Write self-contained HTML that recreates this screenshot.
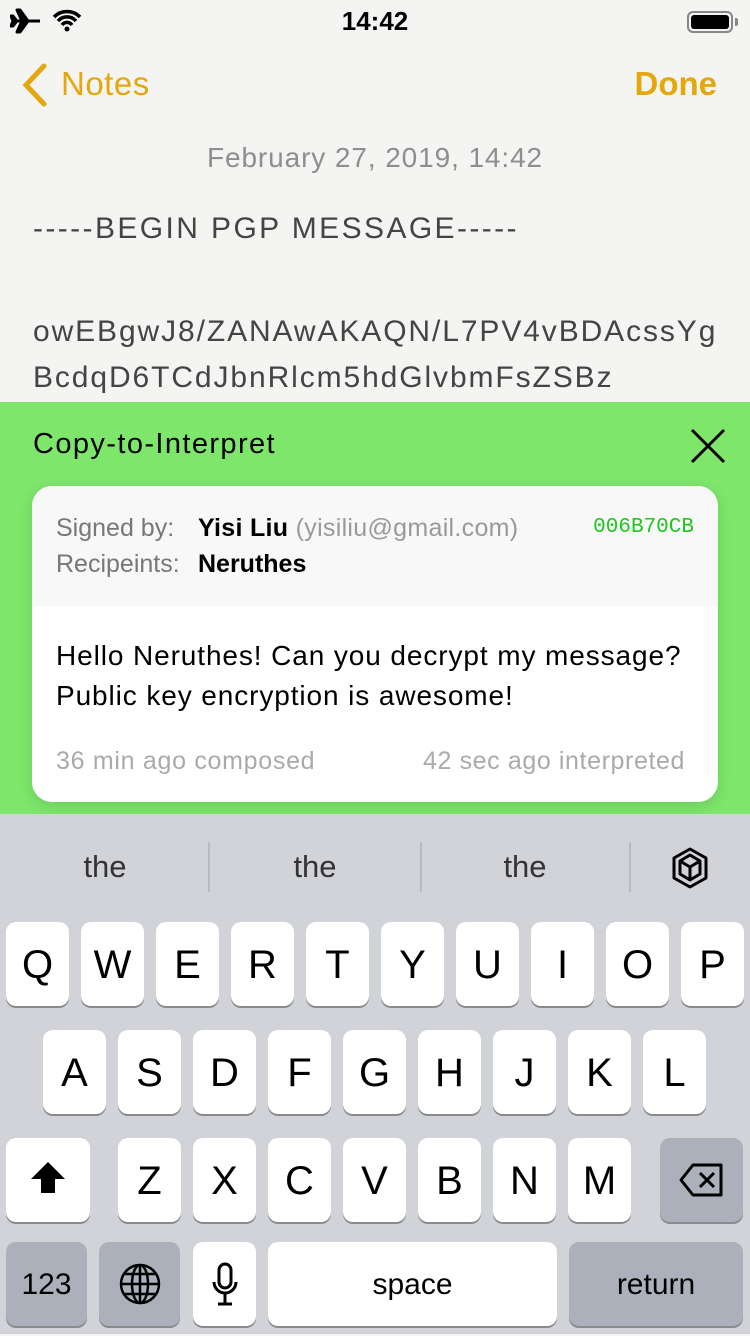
<!DOCTYPE html>
<html><head><meta charset="utf-8"><style>
*{margin:0;padding:0;box-sizing:border-box}
body{width:750px;height:1334px;position:relative;overflow:hidden;background:#f4f4f3;font-family:"Liberation Sans",sans-serif}
.a{position:absolute;white-space:nowrap}
.k{position:absolute;background:#fff;border-radius:10px;box-shadow:0 2px 0 #898a8d;font-size:40px;color:#000;text-align:center;width:63px;height:84px;line-height:86px}
.g{background:#abb0ba}
</style></head><body>
<!-- status bar -->
<svg class="a" style="left:10px;top:8px" width="32" height="26" viewBox="0 0 32 26"><path d="M2 13h28M18 13l-8-11h-3l5 11M18 13l-8 11h-3l5-11M3 13l-2-5h2l4 5M3 13l-2 5h2l4-5" stroke="#000" stroke-width="3" fill="#000" stroke-linejoin="round"/></svg>
<svg class="a" style="left:52px;top:8px" width="30" height="24" viewBox="0 0 30 24"><path d="M2 9a18 18 0 0 1 26 0M6 13a12 12 0 0 1 18 0M10 17a6 6 0 0 1 10 0" stroke="#000" stroke-width="3.5" fill="none"/><circle cx="15" cy="21" r="2.5"/></svg>
<div class="a" style="left:0;width:750px;text-align:center;top:6px;font-size:26px;font-weight:bold">14:42</div>
<div class="a" style="left:687px;top:11px;width:46px;height:22px;border:2px solid #888;border-radius:6px;padding:2px"><div style="background:#000;width:100%;height:100%;border-radius:3px"></div></div>
<div class="a" style="left:735px;top:18px;width:3px;height:8px;background:#888;border-radius:0 2px 2px 0"></div>
<!-- nav -->
<svg class="a" style="left:20px;top:62px" width="30" height="46" viewBox="0 0 30 46"><path d="M24 4L6 23l18 19" stroke="#e4a80e" stroke-width="5" fill="none" stroke-linecap="round"/></svg>
<div class="a" style="left:61px;top:65px;font-size:33px;color:#e4a80e;letter-spacing:0.5px">Notes</div>
<div class="a" style="right:33px;top:65px;font-size:33px;color:#e4a80e;font-weight:bold">Done</div>
<div class="a" style="left:0;width:750px;text-align:center;top:142px;font-size:28px;color:#8e8e8e;letter-spacing:0.9px">February 27, 2019, 14:42</div>
<div class="a" style="left:33px;top:212px;font-size:30px;color:#444;letter-spacing:2.4px">-----BEGIN PGP MESSAGE-----</div>
<div class="a" style="left:33px;top:309px;font-size:30px;color:#444;line-height:46px;letter-spacing:1.9px">owEBgwJ8/ZANAwAKAQN/L7PV4vBDAcssYg<br>BcdqD6TCdJbnRlcm5hdGlvbmFsZSBz</div>
<!-- green panel -->
<div class="a" style="left:0;top:402px;width:750px;height:412px;background:#7de66b"></div>
<div class="a" style="left:33px;top:428px;font-size:29px;color:#000;letter-spacing:1.4px">Copy-to-Interpret</div>
<svg class="a" style="left:690px;top:428px" width="36" height="36"><path d="M2 2L34 34M34 2L2 34" stroke="#000" stroke-width="3"/></svg>
<div class="a" style="left:32px;top:486px;width:686px;height:316px;background:#fff;border-radius:20px;overflow:hidden;box-shadow:0 4px 14px rgba(0,0,0,.12)">
<div style="height:120px;background:#f8f8f8"></div>
</div>
<div class="a" style="left:56px;top:514px;font-size:25px;color:#777">Signed by:</div>
<div class="a" style="left:56px;top:550px;font-size:25px;color:#777">Recipeints:</div>
<div class="a" style="left:198px;top:514px;font-size:25px;color:#000;letter-spacing:0.3px"><b>Yisi Liu</b> <span style="color:#999">(yisiliu@gmail.com)</span></div>
<div class="a" style="left:198px;top:550px;font-size:25px;color:#000;font-weight:bold">Neruthes</div>
<div class="a" style="right:56px;top:516px;font-size:21px;color:#1ec71e;font-family:'Liberation Mono',monospace">006B70CB</div>
<div class="a" style="left:56px;top:636px;font-size:28px;color:#000;line-height:40px;letter-spacing:0.9px">Hello Neruthes! Can you decrypt my message?<br>Public key encryption is awesome!</div>
<div class="a" style="left:56px;top:747px;font-size:25px;color:#aaa;letter-spacing:0.7px">36 min ago composed</div>
<div class="a" style="right:33px;width:300px;text-align:right;top:747px;font-size:25px;color:#aaa;letter-spacing:0.6px;padding-right:32px">42 sec ago interpreted</div>
<!-- keyboard -->
<div class="a" style="left:0;top:814px;width:750px;height:520px;background:#d1d3d9"></div>
<div class="a" style="left:0;width:210px;text-align:center;top:849px;font-size:31px;color:#333">the</div>
<div class="a" style="left:210px;width:210px;text-align:center;top:849px;font-size:31px;color:#333">the</div>
<div class="a" style="left:420px;width:210px;text-align:center;top:849px;font-size:31px;color:#333">the</div>
<div class="a" style="left:208px;top:842px;width:2px;height:50px;background:#b9bbc0"></div>
<div class="a" style="left:420px;top:842px;width:2px;height:50px;background:#b9bbc0"></div>
<div class="a" style="left:629px;top:842px;width:2px;height:50px;background:#b9bbc0"></div>
<svg class="a" style="left:671px;top:847px" width="38" height="42" viewBox="0 0 38 42"><g stroke="#000" stroke-width="3" fill="none" stroke-linejoin="round"><path d="M19 2L35 11v20L19 40 3 31V11z"/><path d="M19 8l10 6v13l-10 6-10-6V14z"/><path d="M9 14l10 6 10-6M19 20v13"/></g></svg>
<div class="k" style="left:6px;top:922px">Q</div><div class="k" style="left:81px;top:922px">W</div><div class="k" style="left:156px;top:922px">E</div><div class="k" style="left:231px;top:922px">R</div><div class="k" style="left:306px;top:922px">T</div><div class="k" style="left:381px;top:922px">Y</div><div class="k" style="left:456px;top:922px">U</div><div class="k" style="left:531px;top:922px">I</div><div class="k" style="left:606px;top:922px">O</div><div class="k" style="left:681px;top:922px">P</div>
<div class="k" style="left:43px;top:1030px">A</div><div class="k" style="left:118px;top:1030px">S</div><div class="k" style="left:193px;top:1030px">D</div><div class="k" style="left:268px;top:1030px">F</div><div class="k" style="left:343px;top:1030px">G</div><div class="k" style="left:418px;top:1030px">H</div><div class="k" style="left:493px;top:1030px">J</div><div class="k" style="left:568px;top:1030px">K</div><div class="k" style="left:643px;top:1030px">L</div>
<div class="k" style="left:6px;top:1138px;width:84px"><svg width="40" height="36" viewBox="0 0 40 36" style="margin-top:22px"><path d="M20 2L3 19h10v14h14V19h10z" fill="#000"/></svg></div>
<div class="k" style="left:118px;top:1138px">Z</div><div class="k" style="left:193px;top:1138px">X</div><div class="k" style="left:268px;top:1138px">C</div><div class="k" style="left:343px;top:1138px">V</div><div class="k" style="left:418px;top:1138px">B</div><div class="k" style="left:493px;top:1138px">N</div><div class="k" style="left:568px;top:1138px">M</div>
<div class="k g" style="left:660px;top:1138px;width:83px"><svg width="46" height="34" viewBox="0 0 46 34" style="margin-top:25px"><path d="M14 2h28v30H14L2 17z" stroke="#000" stroke-width="3" fill="none" stroke-linejoin="round"/><path d="M21 10l14 14M35 10L21 24" stroke="#000" stroke-width="3"/></svg></div>
<div class="k g" style="left:6px;top:1242px;width:81px;font-size:30px">123</div>
<div class="k g" style="left:99px;top:1242px;width:81px"><svg width="42" height="42" viewBox="0 0 42 42" style="margin-top:21px"><g stroke="#000" stroke-width="2.5" fill="none"><circle cx="21" cy="21" r="19"/><ellipse cx="21" cy="21" rx="8" ry="19"/><path d="M21 2v38M2 21h38M6 11h30M6 31h30"/></g></svg></div>
<div class="k" style="left:193px;top:1242px"><svg width="26" height="44" viewBox="0 0 26 44" style="margin-top:20px"><g stroke="#000" stroke-width="3" fill="none"><rect x="7" y="2" width="12" height="24" rx="6"/><path d="M2 20a11 11 0 0 0 22 0M13 31v10M6 42h14"/></g></svg></div>
<div class="k" style="left:268px;top:1242px;width:289px;font-size:30px">space</div>
<div class="k g" style="left:569px;top:1242px;width:174px;font-size:30px">return</div>
</body></html>
